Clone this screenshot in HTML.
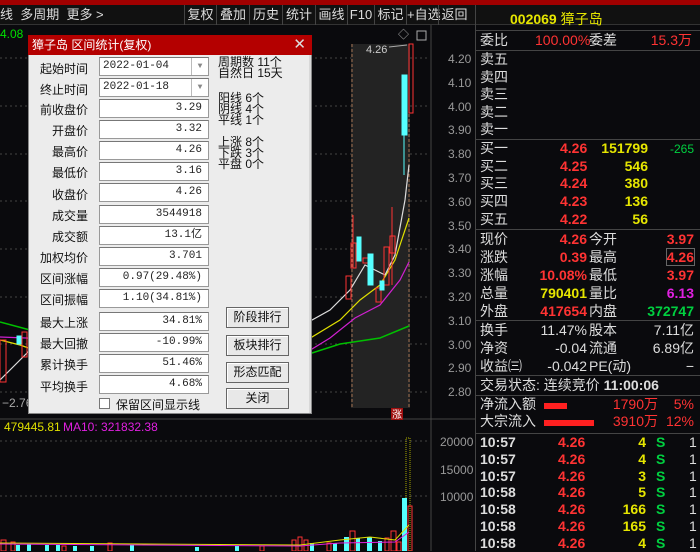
<!DOCTYPE html>
<html><head><meta charset="utf-8"><style>
*{margin:0;padding:0;box-sizing:border-box}
body{width:700px;height:551px;background:#0a0a0d;position:relative;overflow:hidden;font-family:"Liberation Sans","Noto Sans CJK SC",sans-serif;color:#ccc}
.a{position:absolute;white-space:nowrap}
.tb{top:5px;height:20px;font-size:13px;color:#ddd;line-height:20px}
.rp{font-size:14px;line-height:18px}
.r{color:#ff3333}.y{color:#e6e600}.g{color:#00d040}.w{color:#ddd}.m{color:#e020e0}
.lab{font-size:12px;color:#111;text-align:right;width:60px;left:28px}
.fb{left:99px;width:110px;height:19px;background:#fff;border:1px solid #999;border-top-color:#777;font-size:11px;color:#222;text-align:right;padding-right:6px;line-height:17px;font-family:"Liberation Mono","Noto Sans CJK SC",monospace}
.btn{left:226px;width:63px;height:21px;background:#e8e8e8;border:1px solid #666;box-shadow:inset 1px 1px #fff;font-size:12px;color:#111;text-align:center;line-height:19px}
.sep{height:1px;background:#444;left:476px;width:224px}
</style></head><body>
<div class="a" style="left:0;top:0;width:700px;height:5px;background:#a00000"></div>
<div class="a" style="left:0;top:5px;width:700px;height:20px;background:#111;border-bottom:1px solid #333"></div>
<div class="a tb" style="left:0">线&nbsp; 多周期&nbsp; 更多 &gt;</div>
<div class="a tb" style="left:184px;width:290px;display:flex">
<span style="width:32px;border-left:1px solid #444;text-align:center">复权</span><span style="width:33px;border-left:1px solid #444;text-align:center">叠加</span><span style="width:33px;border-left:1px solid #444;text-align:center">历史</span><span style="width:33px;border-left:1px solid #444;text-align:center">统计</span><span style="width:32px;border-left:1px solid #444;text-align:center">画线</span><span style="width:27px;border-left:1px solid #444;text-align:center">F10</span><span style="width:32px;border-left:1px solid #444;text-align:center">标记</span><span style="width:32px;border-left:1px solid #444;text-align:center">+自选</span><span style="width:32px;border-left:1px solid #444;text-align:center">返回</span></div>
<div class="a" style="left:0;top:27px;font-size:12px;color:#00e000">4.08</div>

<svg class="a" style="left:0;top:0" width="476" height="551">
<g stroke="#444" stroke-dasharray="2,3" stroke-width="1">
<line x1="0" y1="58" x2="430" y2="58"/><line x1="0" y1="106" x2="430" y2="106"/><line x1="0" y1="154" x2="430" y2="154"/><line x1="0" y1="201" x2="430" y2="201"/><line x1="0" y1="249" x2="430" y2="249"/><line x1="0" y1="297" x2="430" y2="297"/><line x1="0" y1="344" x2="430" y2="344"/><line x1="0" y1="392" x2="430" y2="392"/>
<line x1="0" y1="441" x2="430" y2="441"/><line x1="0" y1="496" x2="430" y2="496"/>
</g>
<line x1="431" y1="25" x2="431" y2="551" stroke="#444"/>
<line x1="0" y1="419" x2="476" y2="419" stroke="#444"/>
<rect x="351" y="44" width="59" height="364" fill="#232323"/>
<g stroke="#a07050" stroke-dasharray="3,2"><line x1="352" y1="44" x2="352" y2="408"/><line x1="409" y1="44" x2="409" y2="408"/></g>
<rect x="391" y="408" width="12" height="12" fill="#a01010"/><text x="392" y="418" font-size="10" fill="#fff">涨</text>
<text x="398" y="38" font-size="11" fill="#aaa">◇</text><rect x="417" y="31" width="9" height="9" fill="none" stroke="#aaa"/>
<text x="366" y="53" font-size="11" fill="#ccc">4.26</text><line x1="389" y1="47" x2="407" y2="45" stroke="#aaa"/>
<polyline fill="none" stroke="#00c000" stroke-width="1.5" points="0,322 30,330 60,345 312,353 340,344 380,338 409,326"/>
<polyline fill="none" stroke="#d020d0" stroke-width="1.2" points="0,337 312,349 330,338 355,318 380,305 400,280 409,262"/>
<polyline fill="none" stroke="#e0e000" stroke-width="1.2" points="0,340 20,345 40,352 80,360 312,337 340,320 360,300 380,285 395,260 409,218"/>
<polyline fill="none" stroke="#ddd" stroke-width="1.2" points="0,380 20,360 40,340 80,325 312,320 330,310 350,290 365,265 375,270 385,275 395,255 405,200 409,165"/>
<g stroke="#ff3333" fill="none">
<rect x="0" y="340" width="6" height="42"/><rect x="22" y="332" width="5" height="25"/>
<line x1="392" y1="207" x2="392" y2="285"/><rect x="390" y="236" width="5" height="17"/>
<rect x="346" y="276" width="5" height="23"/><line x1="353" y1="215" x2="353" y2="268"/><rect x="351" y="243" width="5" height="25"/>
<rect x="363" y="258" width="5" height="5"/><rect x="376" y="288" width="5" height="14"/><rect x="384" y="247" width="5" height="38"/>
<rect x="409" y="44" width="4" height="69"/>
</g>
<g fill="#5ff" stroke="#5ff">
<rect x="357" y="237" width="4" height="24"/><rect x="368" y="254" width="5" height="31"/><rect x="380" y="281" width="4" height="9"/>
<line x1="404" y1="135" x2="404" y2="175"/><rect x="402" y="75" width="5" height="60"/>
<rect x="17" y="336" width="4" height="8"/><rect x="50" y="338" width="4" height="10"/>
</g>
<g font-size="12" fill="#999"><text x="448" y="63">4.20</text><text x="448" y="87">4.10</text><text x="448" y="111">4.00</text><text x="448" y="134">3.90</text><text x="448" y="158">3.80</text><text x="448" y="182">3.70</text><text x="448" y="206">3.60</text><text x="448" y="230">3.50</text><text x="448" y="253">3.40</text><text x="448" y="277">3.30</text><text x="448" y="301">3.20</text><text x="448" y="325">3.10</text><text x="448" y="349">3.00</text><text x="448" y="372">2.90</text><text x="448" y="396">2.80</text>
<text x="440" y="446">20000</text><text x="440" y="474">15000</text><text x="440" y="501">10000</text></g>
<text x="2" y="407" font-size="12" fill="#aaa">−2.76</text>
<text x="4" y="431" font-size="12" fill="#e0e000">479445.81</text><text x="63" y="431" font-size="12" fill="#e020e0">MA10: 321832.38</text>
<rect x="406" y="438" width="4" height="113" fill="none" stroke="#aa0" stroke-dasharray="1,1"/>
<rect x="402" y="498" width="5" height="53" fill="#5ff"/><rect x="408" y="506" width="4" height="45" fill="none" stroke="#f33"/>
<g fill="#5ff"><rect x="16" y="545" width="4" height="6"/><rect x="27" y="544" width="4" height="7"/><rect x="45" y="545" width="4" height="6"/><rect x="56" y="545" width="4" height="6"/><rect x="73" y="546" width="4" height="5"/><rect x="90" y="546" width="4" height="5"/><rect x="130" y="545" width="4" height="6"/><rect x="195" y="547" width="4" height="4"/><rect x="235" y="546" width="4" height="5"/><rect x="310" y="543" width="4" height="8"/><rect x="333" y="543" width="4" height="8"/><rect x="344" y="537" width="5" height="14"/><rect x="356" y="538" width="4" height="13"/><rect x="367" y="537" width="5" height="14"/><rect x="378" y="541" width="4" height="10"/></g>
<g fill="none" stroke="#f33"><rect x="1" y="540" width="5" height="11"/><rect x="11" y="542" width="4" height="9"/><rect x="62" y="546" width="4" height="5"/><rect x="108" y="543" width="4" height="8"/><rect x="260" y="546" width="4" height="5"/><rect x="292" y="540" width="4" height="11"/><rect x="298" y="537" width="4" height="14"/><rect x="304" y="540" width="4" height="11"/><rect x="327" y="543" width="4" height="8"/><rect x="350" y="531" width="5" height="20"/><rect x="385" y="538" width="4" height="13"/><rect x="391" y="531" width="5" height="20"/><rect x="397" y="542" width="4" height="9"/></g>
<polyline fill="none" stroke="#e0e000" points="0,543 300,545 340,540 370,537 395,540 409,525"/>
<polyline fill="none" stroke="#e020e0" points="0,544 300,546 340,543 395,542 409,532"/>
</svg>

<div class="a" style="left:28px;top:35px;width:284px;height:379px;background:#ececec;border:1px solid #888"></div>
<div class="a" style="left:28px;top:35px;width:284px;height:20px;background:#b40000;color:#fff;font-size:12px;line-height:20px;padding-left:4px">獐子岛 区间统计(复权)<span style="position:absolute;right:6px;top:0;font-size:15px;color:#ddd">✕</span></div>
<div class="a" style="left:309px;top:55px;width:2px;height:358px;background:#d8d8d8"></div>
<div class="a lab" style="top:60px">起始时间</div><div class="a fb" style="top:57px;text-align:left;padding-left:3px">2022-01-04<span style="position:absolute;right:0;top:0;width:17px;height:17px;border-left:1px solid #bbb;color:#888;text-align:center;font-size:8px">▼</span></div>
<div class="a lab" style="top:81px">终止时间</div><div class="a fb" style="top:78px;text-align:left;padding-left:3px">2022-01-18<span style="position:absolute;right:0;top:0;width:17px;height:17px;border-left:1px solid #bbb;color:#888;text-align:center;font-size:8px">▼</span></div>
<div class="a lab" style="top:101px">前收盘价</div><div class="a fb" style="top:99px">3.29</div>
<div class="a lab" style="top:122px">开盘价</div><div class="a fb" style="top:120px">3.32</div>
<div class="a lab" style="top:143px">最高价</div><div class="a fb" style="top:141px">4.26</div>
<div class="a lab" style="top:164px">最低价</div><div class="a fb" style="top:162px">3.16</div>
<div class="a lab" style="top:186px">收盘价</div><div class="a fb" style="top:183px">4.26</div>
<div class="a lab" style="top:207px">成交量</div><div class="a fb" style="top:205px">3544918</div>
<div class="a lab" style="top:228px">成交额</div><div class="a fb" style="top:226px">13.1亿</div>
<div class="a lab" style="top:249px">加权均价</div><div class="a fb" style="top:247px">3.701</div>
<div class="a lab" style="top:270px">区间涨幅</div><div class="a fb" style="top:268px">0.97(29.48%)</div>
<div class="a lab" style="top:291px">区间振幅</div><div class="a fb" style="top:289px">1.10(34.81%)</div>
<div class="a lab" style="top:314px">最大上涨</div><div class="a fb" style="top:312px">34.81%</div>
<div class="a lab" style="top:335px">最大回撤</div><div class="a fb" style="top:333px">-10.99%</div>
<div class="a lab" style="top:356px">累计换手</div><div class="a fb" style="top:354px">51.46%</div>
<div class="a lab" style="top:378px">平均换手</div><div class="a fb" style="top:375px">4.68%</div>
<div class="a" style="left:99px;top:398px;width:11px;height:11px;background:#fff;border:1px solid #777"></div>
<div class="a" style="left:116px;top:396px;font-size:12px;color:#111">保留区间显示线</div>
<div class="a" style="left:218px;top:57px;font-size:12px;color:#111;line-height:11px">周期数 11个<br>自然日 15天</div>
<div class="a" style="left:218px;top:93px;font-size:12px;color:#111;line-height:11px">阳线 6个<br>阴线 4个<br>平线 1个</div>
<div class="a" style="left:218px;top:137px;font-size:12px;color:#111;line-height:11px">上涨 8个<br>下跌 3个<br>平盘 0个</div>
<div class="a btn" style="top:307px">阶段排行</div>
<div class="a btn" style="top:335px">板块排行</div>
<div class="a btn" style="top:362px">形态匹配</div>
<div class="a btn" style="top:388px">关闭</div>

<div class="a" style="left:475px;top:5px;width:1px;height:546px;background:#444"></div>
<div class="a" style="left:510px;top:9px;font-size:14px;color:#e6e600;font-weight:bold">002069 <span style="font-weight:normal">獐子岛</span></div>
<div class="sep a" style="top:30px"></div>
<div class="a rp w" style="left:480px;top:31px">委比</div><div class="a rp r" style="left:535px;top:31px">100.00%</div><div class="a rp w" style="left:589px;top:31px">委差</div><div class="a rp r" style="right:8px;top:31px">15.3万</div>
<div class="sep a" style="top:50px"></div>
<div class="a rp w" style="left:480px;top:51px;line-height:17.5px">卖五<br>卖四<br>卖三<br>卖二<br>卖一</div>
<div class="sep a" style="top:139px"></div>
<div class="a rp w" style="left:480px;top:140px;line-height:17.7px">买一<br>买二<br>买三<br>买四<br>买五</div>
<div class="a rp r" style="left:560px;top:140px;line-height:17.7px;font-weight:bold">4.26<br>4.25<br>4.24<br>4.23<br>4.22</div>
<div class="a rp y" style="right:52px;top:140px;line-height:17.7px;font-weight:bold;text-align:right">151799<br>546<br>380<br>136<br>56</div>
<div class="a g" style="right:6px;top:142px;font-size:12px">-265</div>
<div class="sep a" style="top:229px"></div>
<div class="a rp w" style="left:480px;top:230px;line-height:18px">现价<br>涨跌<br>涨幅<br>总量<br>外盘</div>
<div class="a rp" style="left:0;width:587px;top:230px;line-height:18px;text-align:right;font-weight:bold"><span class="r">4.26</span><br><span class="r">0.39</span><br><span class="r">10.08%</span><br><span class="y">790401</span><br><span class="r">417654</span></div>
<div class="a rp w" style="left:589px;top:230px;line-height:18px">今开<br>最高<br>最低<br>量比<br>内盘</div>
<div class="a rp" style="right:6px;top:230px;line-height:18px;text-align:right;font-weight:bold"><span class="r">3.97</span><br><span class="r" style="outline:1px solid #666">4.26</span><br><span class="r">3.97</span><br><span class="m">6.13</span><br><span class="g">372747</span></div>
<div class="sep a" style="top:320px"></div>
<div class="a rp w" style="left:480px;top:321px;line-height:18px">换手<br>净资<br>收益㈢</div>
<div class="a rp w" style="left:0;width:587px;top:321px;line-height:18px;text-align:right">11.47%<br>-0.04<br>-0.042</div>
<div class="a rp w" style="left:589px;top:321px;line-height:18px">股本<br>流通<br>PE(动)</div>
<div class="a rp w" style="right:6px;top:321px;line-height:18px;text-align:right">7.11亿<br>6.89亿<br>−</div>
<div class="sep a" style="top:375px"></div>
<div class="a rp w" style="left:480px;top:376px">交易状态: 连续竞价 <b>11:00:06</b></div>
<div class="sep a" style="top:395px"></div>
<div class="a rp w" style="left:480px;top:396px;line-height:17px">净流入额<br>大宗流入</div>
<div class="a" style="left:544px;top:403px;width:23px;height:6px;background:#ff2020"></div>
<div class="a" style="left:544px;top:420px;width:50px;height:6px;background:#ff2020"></div>
<div class="a rp r" style="right:42px;top:396px;line-height:17px;text-align:right">1790万<br>3910万</div>
<div class="a rp r" style="right:6px;top:396px;line-height:17px;text-align:right">5%<br>12%</div>
<div class="sep a" style="top:433px"></div>
<div class="a rp w" style="left:480px;top:434px;line-height:16.8px;font-weight:bold">10:57<br>10:57<br>10:57<br>10:58<br>10:58<br>10:58<br>10:58</div>
<div class="a rp r" style="left:558px;top:434px;line-height:16.8px;font-weight:bold">4.26<br>4.26<br>4.26<br>4.26<br>4.26<br>4.26<br>4.26</div>
<div class="a rp y" style="right:54px;top:434px;line-height:16.8px;font-weight:bold;text-align:right">4<br>4<br>3<br>5<br>166<br>165<br>4</div>
<div class="a rp g" style="left:656px;top:434px;line-height:16.8px;font-weight:bold">S<br>S<br>S<br>S<br>S<br>S<br>S</div>
<div class="a rp w" style="left:689px;top:434px;line-height:16.8px">1<br>1<br>1<br>1<br>1<br>1<br>1</div>
</body></html>
